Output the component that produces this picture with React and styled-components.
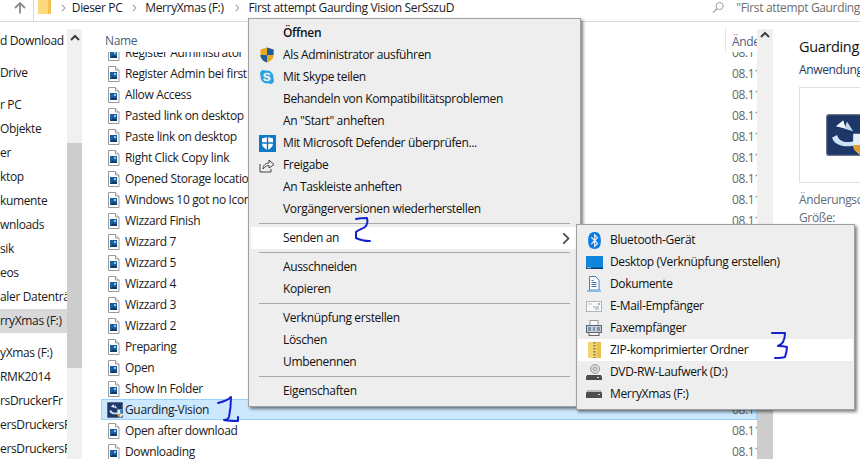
import styled, { createGlobalStyle } from "styled-components";
import { FaBluetooth, FaSkype } from "react-icons/fa";

const GlobalStyle = createGlobalStyle`
  html, body {
    margin: 0;
    background: #fff;
  }
  body {
    font-family: "Open Sans", "Liberation Sans", sans-serif;
    font-size: 12px;
    letter-spacing: -0.35px;
    color: #1a1a1a;
    overflow: hidden;
  }
`;

const Screen = styled.div`
  position: relative;
  width: 860px;
  height: 459px;
  overflow: hidden;
  background: #fff;
`;

const AddressRow = styled.div`
  display: flex;
  height: 22px;
  border-bottom: 1px solid #d9d9d9;
  box-sizing: border-box;
`;

const NavArea = styled.div`
  width: 33px;
  display: flex;
  justify-content: flex-end;
  padding: 1px 6px 0 0;
  box-sizing: border-box;
`;

const Breadcrumb = styled.div`
  width: 674px;
  border-left: 1px solid #d9d9d9;
  display: flex;
  align-items: center;
  height: 21px;
  padding: 0 0 6px 4px;
  box-sizing: border-box;
  white-space: nowrap;
`;

const Crumb = styled.span`
  margin-left: ${({ $gap }) => $gap}px;
`;

const SearchBox = styled.div`
  flex: 1;
  display: flex;
  height: 21px;
  align-items: center;
  padding: 0 0 6px 5px;
  box-sizing: border-box;
  gap: 12px;
  color: #6d6d6d;
  white-space: nowrap;
  overflow: hidden;
`;

const Main = styled.div`
  display: flex;
  height: 437px;
`;

const Sidebar = styled.div`
  width: 82px;
  display: flex;
  flex-shrink: 0;
`;

const NavTree = styled.div`
  width: 67px;
  padding-top: 7px;
  overflow: hidden;
`;

const NavItem = styled.div`
  height: 24px;
  line-height: 24px;
  white-space: nowrap;
  overflow: hidden;
  background: ${({ $active }) => ($active ? "#d9d9d9" : "transparent")};
  margin-bottom: ${({ $after }) => $after || 0}px;
`;

const ScrollBar = styled.div`
  width: ${({ $width }) => $width}px;
  flex-shrink: 0;
  margin-top: 7px;
  background: #f0f0f0;
  display: flex;
  flex-direction: column;
`;

const ScrollArrow = styled.div`
  height: 16px;
  display: flex;
  align-items: center;
  justify-content: center;
`;

const ScrollGap = styled.div`
  height: ${({ $height }) => $height}px;
  flex-shrink: 0;
`;

const ScrollThumb = styled.div`
  height: ${({ $height }) => $height}px;
  background: #cdcdcd;
  flex-shrink: 0;
`;

const FileArea = styled.div`
  width: 675px;
  flex-shrink: 0;
  display: flex;
  flex-direction: column;
  padding-left: 19px;
  box-sizing: border-box;
  overflow: hidden;
`;

const HeaderRow = styled.div`
  height: 30px;
  flex-shrink: 0;
  display: grid;
  grid-template-columns: 624px 1fr;
  color: #4c607a;
  align-items: end;
`;

const HeaderName = styled.div`
  padding: 0 0 3px 4px;
`;

const HeaderDate = styled.div`
  height: 24px;
  border-left: 1px solid #e5e5e5;
  padding: 5px 0 0 6px;
  box-sizing: border-box;
  white-space: nowrap;
  overflow: hidden;
`;

const FileList = styled.div`
  flex: 1;
  overflow: hidden;
`;

const FileRows = styled.div`
  margin-top: -10px;
`;

const FileRow = styled.div`
  height: 21px;
  box-sizing: border-box;
  display: grid;
  grid-template-columns: 18px 607px 1fr;
  align-items: center;
  padding-left: 6px;
  white-space: nowrap;
  background: ${({ $selected }) => ($selected ? "#cce8ff" : "transparent")};
  outline: ${({ $selected }) => ($selected ? "1px solid #99d1ff" : "none")};
  outline-offset: -1px;
`;

const FileName = styled.span`
  overflow: hidden;
`;

const FileDate = styled.span`
  color: #666;
  overflow: hidden;
`;

const Preview = styled.div`
  flex: 1;
  padding: 15px 0 0 26px;
  min-width: 0;
  overflow: hidden;
  white-space: nowrap;
`;

const PreviewTitle = styled.div`
  font-size: 14.5px;
  line-height: 20px;
  color: #111;
`;

const PreviewType = styled.div`
  margin-top: 5px;
  line-height: 16px;
  color: #1f3a5f;
`;

const PreviewBox = styled.div`
  margin-top: 9px;
  width: 90px;
  height: 96px;
  box-sizing: border-box;
  border: 1px solid #dfdfdf;
  margin-bottom: 8px;
  padding: 26px 0 0 26px;
`;

const PreviewMeta = styled.div`
  line-height: 18px;
  color: #5f6b7a;
`;

const Menu = styled.div`
  position: absolute;
  left: ${({ $left }) => $left}px;
  top: ${({ $top }) => $top}px;
  width: ${({ $width }) => $width}px;
  box-sizing: border-box;
  background: #eeeeee;
  border: 1px solid #a0a0a0;
  box-shadow: 2px 2px 3px rgba(0, 0, 0, 0.5);
  padding: ${({ $pad }) => $pad};
`;

const MenuItem = styled.div`
  height: 22px;
  box-sizing: border-box;
  padding-bottom: 2px;
  display: grid;
  grid-template-columns: 32px 1fr auto;
  align-items: center;
  white-space: nowrap;
  color: #111;
  font-weight: ${({ $bold }) => ($bold ? 600 : 400)};
  background: ${({ $hot }) => ($hot ? "#ffffff" : "transparent")};
`;

const MenuIcon = styled.span`
  display: flex;
  justify-content: center;
  align-items: center;
  padding-top: 2px;
`;

const MenuArrow = styled.span`
  display: flex;
  padding: 2px 8px 0 0;
`;

const Separator = styled.div`
  height: 7px;
  display: flex;
  align-items: center;
  padding: 0 8px;
  &::after {
    content: "";
    flex: 1;
    height: 1px;
    background: #a8a8a8;
  }
`;

const Scribble = styled.svg`
  position: absolute;
  left: ${({ $left }) => $left}px;
  top: ${({ $top }) => $top}px;
  fill: none;
  stroke: #1520d0;
  stroke-width: 2;
  stroke-linecap: round;
  stroke-linejoin: round;
`;

const PageIcon = () => (
  <svg width="13" height="16" viewBox="0 0 13 16">
    <path d="M1.5.5h7l3.5 3.500v11.500H1.500z" fill="#fff" stroke="#9a9a9a" />
    <path d="M8.500.5v3.500H12" fill="#eee" stroke="#9a9a9a" />
    <rect x="3" y="6" width="7" height="7" fill="#1c5f9e" />
    <path d="M3 13l3-3 2 1.500 2-1v2.500z" fill="#0f3a66" />
    <rect x="7" y="7" width="2" height="2" fill="#8cc4ea" />
  </svg>
);

const AppIcon = ({ size = 16 }) => (
  <svg width={size} height={size} viewBox="0 0 34 34">
    <rect x="0.500" y="0.500" width="33" height="33" rx="2" fill="#1d3768" stroke="#6d7480" />
    <path d="M5 19c1 6 11 9 19 6l-2-3c-6 2-12 0-13-5z" fill="#cfe2f5" />
    <path d="M14 5l-6 5 8 2z" fill="#f2f6fb" />
    <path d="M17 6l-2 6 7 2z" fill="#c3d7ee" />
    <path d="M22 16h12v9c0 4-4 7-6 8-2-1-6-4-6-8z" fill="#e8eef6" />
    <path d="M22 25h6v8c-2-1-6-4-6-8z" fill="#e0a030" />
    <path d="M28 16h6v9h-6z" fill="#3a7cc0" />
  </svg>
);

const UpArrow = () => (
  <svg width="14" height="14" viewBox="0 0 14 14">
    <path d="M7 12.500V2M2 7l5-5 5 5" fill="none" stroke="#8a8a8a" strokeWidth="1.800" />
  </svg>
);

const FolderIcon = () => (
  <svg width="14" height="15" viewBox="0 0 14 15">
    <path d="M0 0h13v14H0z" fill="#fcd97c" />
    <path d="M10 0h3v14h-3z" fill="#f2c14e" />
  </svg>
);

const Chevron = ({ size = 8, color = "#9a9a9a" }) => (
  <svg width={size * 0.6} height={size} viewBox="0 0 6 10">
    <path d="M1 1l4 4-4 4" fill="none" stroke={color} strokeWidth="1.300" />
  </svg>
);

const Caret = () => (
  <svg width="10" height="7" viewBox="0 0 10 7">
    <path d="M1 6l4-4 4 4" fill="none" stroke="#404040" strokeWidth="2" />
  </svg>
);

const SearchIcon = () => (
  <svg width="13" height="13" viewBox="0 0 13 13">
    <circle cx="8" cy="5" r="3.800" fill="none" stroke="#9a9a9a" />
    <path d="M5.200 7.800L1 12" stroke="#9a9a9a" strokeWidth="1.200" />
  </svg>
);

const ShieldIcon = () => (
  <svg width="14" height="16" viewBox="0 0 14 16">
    <path d="M7 .5l6.500 2v6c0 3.500-3.500 6-6.500 7-3-1-6.500-3.500-6.500-7v-6z" fill="#e8a91e" />
    <path d="M7 .5l6.500 2V8H7zM7 8v7.500c-3-1-6.500-3.500-6.500-7.500z" fill="#1d5c9e" />
  </svg>
);

const DefenderIcon = () => (
  <svg width="17" height="17" viewBox="0 0 17 17">
    <rect width="17" height="17" fill="#0f79c9" />
    <path d="M8.500 2l5.500 1.500v5c0 3-3 5.500-5.500 6.500C6 14 3 11.500 3 8.500v-5z" fill="#fff" />
    <path d="M7.800 2h1.400v13H7.800zM3 7.300h11v1.400H3z" fill="#0f79c9" />
  </svg>
);

const ShareIcon = () => (
  <svg width="16" height="15" viewBox="0 0 16 15">
    <path d="M1 6v8h11v-3" fill="none" stroke="#444" />
    <path d="M4 11c0-4 3-6 6-6V2l5 4.500L10 10V7.500C7.500 7.500 5.500 9 4 11z" fill="none" stroke="#444" />
  </svg>
);

const DesktopIcon = () => (
  <svg width="17" height="13" viewBox="0 0 17 13">
    <rect width="17" height="13" fill="#0f86dc" />
    <rect y="11.500" width="17" height="1.500" fill="#0b3f73" />
    <path d="M1 11.800h4" stroke="#cfe8fa" strokeWidth="0.800" />
  </svg>
);

const DocsIcon = () => (
  <svg width="14" height="16" viewBox="0 0 14 16">
    <path d="M2.500.5h6l3.500 3.500v10H2.500z" fill="#fff" stroke="#3c82c8" />
    <path d="M4.500 6.500h5M4.500 8.500h5M4.500 10.500h5M4.500 4.500h2" stroke="#3f6f9f" />
    <path d="M0 14h14v2H0z" fill="#8db9de" />
  </svg>
);

const MailIcon = () => (
  <svg width="16" height="11" viewBox="0 0 16 11">
    <rect x=".5" y=".5" width="15" height="10" fill="#f8f8f8" stroke="#b4b4b4" />
    <path d="M7 6h6M9 8h4" stroke="#8aa0b4" />
    <path d="M2 3h4" stroke="#c4c4c4" />
    <rect x="12" y="2" width="2" height="2" fill="#9ab4cc" />
  </svg>
);

const FaxIcon = () => (
  <svg width="16" height="16" viewBox="0 0 16 16">
    <rect x="4" y="0.500" width="8" height="5" fill="#fafafa" stroke="#9a9a9a" />
    <rect x=".5" y="5.500" width="15" height="7" fill="#c5cdd6" stroke="#5a6470" />
    <path d="M2 8h3M7 8h2M11 8h3M2 10h3M7 10h2M11 10h3" stroke="#3a5f8a" />
    <rect x="3" y="12.500" width="10" height="3" fill="#f4f4f4" stroke="#666" />
  </svg>
);

const ZipIcon = () => (
  <svg width="13" height="16" viewBox="0 0 13 16">
    <rect width="13" height="16" fill="#f5d770" />
    <rect x="9" width="4" height="16" fill="#eac14c" />
    <path d="M6.500 0v16" stroke="#8a8060" strokeWidth="2.400" strokeDasharray="1.500 1.500" />
  </svg>
);

const DvdIcon = () => (
  <svg width="16" height="16" viewBox="0 0 16 16">
    <circle cx="9" cy="5" r="4.500" fill="#d6d6d6" stroke="#a0a0a0" />
    <circle cx="9" cy="5" r="1.500" fill="#f4f4f4" stroke="#999" />
    <path d="M1 11h14l1 2v3H0v-3z" fill="#4c4c4c" />
    <rect x="11" y="13" width="2" height="1" fill="#9fd" />
  </svg>
);

const DriveIcon = () => (
  <svg width="16" height="8" viewBox="0 0 16 8">
    <path d="M2 0h12l2 3v5H0V3z" fill="#4d4d4d" />
    <path d="M2 0h12l1 2H1z" fill="#bdbdbd" />
    <rect x="12" y="4" width="2" height="1" fill="#9fd" />
  </svg>
);

const NAV_ITEMS = [
  { label: "d Download", after: 8 },
  { label: "Drive", after: 8 },
  { label: "r PC" },
  { label: "Objekte" },
  { label: "er" },
  { label: "ktop" },
  { label: "kumente" },
  { label: "wnloads" },
  { label: "sik" },
  { label: "eos" },
  { label: "aler Datenträ" },
  { label: "rryXmas (F:)", active: true, after: 8 },
  { label: "yXmas (F:)" },
  { label: "RMK2014" },
  { label: "rsDruckerFr" },
  { label: "ersDruckersF" },
  { label: "ersDruckersF" },
];

const FILES = [
  "Register Administrator",
  "Register Admin bei first",
  "Allow Access",
  "Pasted link on desktop",
  "Paste link on desktop",
  "Right Click Copy link",
  "Opened Storage location",
  "Windows 10 got no Icon",
  "Wizzard Finish",
  "Wizzard 7",
  "Wizzard 5",
  "Wizzard 4",
  "Wizzard 3",
  "Wizzard 2",
  "Preparing",
  "Open",
  "Show In Folder",
  "Guarding-Vision",
  "Open after download",
  "Downloading",
];

const MAIN_MENU = [
  [
    { label: "Öffnen", bold: true },
    { label: "Als Administrator ausführen", icon: <ShieldIcon /> },
    { label: "Mit Skype teilen", icon: <FaSkype size={16} color="#28a4e4" /> },
    { label: "Behandeln von Kompatibilitätsproblemen" },
    { label: 'An "Start" anheften' },
    { label: "Mit Microsoft Defender überprüfen...", icon: <DefenderIcon /> },
    { label: "Freigabe", icon: <ShareIcon /> },
    { label: "An Taskleiste anheften" },
    { label: "Vorgängerversionen wiederherstellen" },
  ],
  [{ label: "Senden an", hot: true, arrow: true }],
  [{ label: "Ausschneiden" }, { label: "Kopieren" }],
  [{ label: "Verknüpfung erstellen" }, { label: "Löschen" }, { label: "Umbenennen" }],
  [{ label: "Eigenschaften" }],
];

const SEND_MENU = [
  { label: "Bluetooth-Gerät", icon: <FaBluetooth size={17} color="#0a7ce6" /> },
  { label: "Desktop (Verknüpfung erstellen)", icon: <DesktopIcon /> },
  { label: "Dokumente", icon: <DocsIcon /> },
  { label: "E-Mail-Empfänger", icon: <MailIcon /> },
  { label: "Faxempfänger", icon: <FaxIcon /> },
  { label: "ZIP-komprimierter Ordner", icon: <ZipIcon />, hot: true },
  { label: "DVD-RW-Laufwerk (D:)", icon: <DvdIcon /> },
  { label: "MerryXmas (F:)", icon: <DriveIcon /> },
];

function Item({ label, icon, bold, hot, arrow }) {
  return (
    <MenuItem $bold={bold} $hot={hot}>
      <MenuIcon>{icon}</MenuIcon>
      <span>{label}</span>
      {arrow && (
        <MenuArrow>
          <Chevron size={13} color="#444" />
        </MenuArrow>
      )}
    </MenuItem>
  );
}

export default function App() {
  return (
    <Screen>
      <GlobalStyle />
      <AddressRow>
        <NavArea>
          <UpArrow />
        </NavArea>
        <Breadcrumb>
          <FolderIcon />
          <Crumb $gap={9}>
            <Chevron />
          </Crumb>
          <Crumb $gap={6}>Dieser PC</Crumb>
          <Crumb $gap={10}>
            <Chevron />
          </Crumb>
          <Crumb $gap={8}>MerryXmas (F:)</Crumb>
          <Crumb $gap={11}>
            <Chevron />
          </Crumb>
          <Crumb $gap={9}>First attempt Gaurding Vision SerSszuD</Crumb>
        </Breadcrumb>
        <SearchBox>
          <SearchIcon />
          <span>"First attempt Gaurding</span>
        </SearchBox>
      </AddressRow>

      <Main>
        <Sidebar>
          <NavTree>
            {NAV_ITEMS.map(({ label, active, after }, i) => (
              <NavItem key={i} $active={active} $after={after}>
                {label}
              </NavItem>
            ))}
          </NavTree>
          <ScrollBar $width={15}>
            <ScrollArrow>
              <Caret />
            </ScrollArrow>
            <ScrollGap $height={98} />
            <ScrollThumb $height={225} />
          </ScrollBar>
        </Sidebar>

        <FileArea>
          <HeaderRow>
            <HeaderName>Name</HeaderName>
            <HeaderDate>Änderungsdatum</HeaderDate>
          </HeaderRow>
          <FileList>
            <FileRows>
              {FILES.map((name) => {
                const selected = name === "Guarding-Vision";
                return (
                  <FileRow key={name} $selected={selected}>
                    {selected ? <AppIcon /> : <PageIcon />}
                    <FileName>{name}</FileName>
                    <FileDate>08.11</FileDate>
                  </FileRow>
                );
              })}
            </FileRows>
          </FileList>
        </FileArea>

        <ScrollBar $width={16}>
          <ScrollArrow>
            <Caret />
          </ScrollArrow>
          <ScrollGap $height={300} />
          <ScrollThumb $height={120} />
        </ScrollBar>

        <Preview>
          <PreviewTitle>Guarding</PreviewTitle>
          <PreviewType>Anwendung</PreviewType>
          <PreviewBox>
            <AppIcon size={42} />
          </PreviewBox>
          <PreviewMeta>Änderungsd</PreviewMeta>
          <PreviewMeta>Größe:</PreviewMeta>
        </Preview>
      </Main>

      <Menu $left={248} $top={18} $width={333} $pad="3px 2px 4px">
        {MAIN_MENU.map((group, g) => (
          <div key={g}>
            {g > 0 && <Separator />}
            {group.map((item) => (
              <Item key={item.label} {...item} />
            ))}
          </div>
        ))}
      </Menu>

      <Menu $left={576} $top={224} $width={279} $pad="4px 1px">
        {SEND_MENU.map((item) => (
          <Item key={item.label} {...item} />
        ))}
      </Menu>

      <Scribble $left={214} $top={394} width="28" height="30" viewBox="0 0 28 30">
        <path d="M4 9C8 8 14 6 17 3C17 10 16 18 15 23C14 26 12 26 10 26C15 27 20 27 24 27L24 23" />
      </Scribble>
      <Scribble $left={352} $top={216} width="22" height="30" viewBox="0 0 22 30">
        <path d="M4 3C8 2 12 2 15 2C16 6 15 9 13 11C10 13 6 14 4 16C4 18 4 20 4 22C8 24 13 25 18 25" />
      </Scribble>
      <Scribble $left={768} $top={330} width="24" height="32" viewBox="0 0 24 32">
        <path d="M4 3L17 3C17 7 16 10 15 12C14 14 12 15 10 16C13 16 16 16 19 17C19 21 18 24 17 27C14 28 10 28 7 28" />
      </Scribble>
    </Screen>
  );
}
